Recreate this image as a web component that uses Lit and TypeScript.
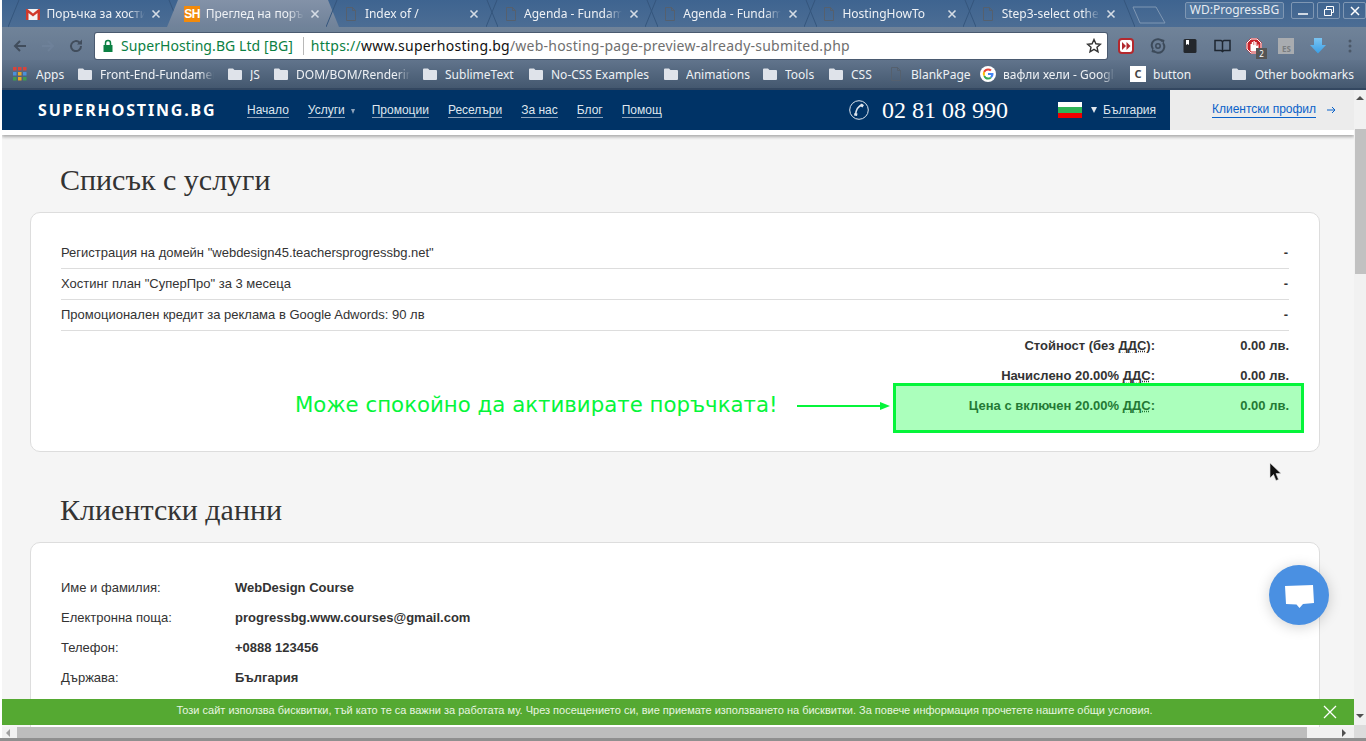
import { LitElement, html, css, svg } from "lit";
import { customElement } from "lit/decorators.js";

const docIcon = html`<svg class="ico" viewBox="0 0 16 16" width="16" height="16"><path d="M3.5 1.5h6l3 3v10h-9z M9.5 1.5v3h3" fill="none" stroke="#55606e" stroke-width="1"/></svg>`;
const folderIcon = html`<svg class="ico" viewBox="0 0 16 16" width="16" height="16"><path d="M1 3.5q0-1 1-1h4l1.500 1.500h6.500q1 0 1 1v8q0 1-1 1h-12q-1 0-1-1z" fill="#dfe3ea"/></svg>`;
const gmailIcon = html`<svg class="ico" viewBox="0 0 16 16" width="16" height="16"><path d="M1 3h14v11h-14z" fill="#f4f4f4"/><path d="M1 14V3h1.500L8 7.500 13.500 3H15v11h-2.500V7L8 10.500 3.500 7v7z" fill="#d0392b"/></svg>`;
const shIcon = html`<span class="sh">SH</span>`;

const googleIcon = html`<svg class="ico" viewBox="0 0 16 16" width="16" height="16"><circle cx="8" cy="8" r="8" fill="#fff"/><path d="M13.500 8.200q0-.6-.1-1.100H8v2h3.100q-.2 1-1 1.600l1.600 1.200q1.800-1.500 1.800-3.700z" fill="#4285f4"/><path d="M8 13.600q2.200 0 3.700-1.500l-1.600-1.200q-.9.600-2.100.6-2.200 0-3-2L3.300 9.700Q4.700 13.600 8 13.600z" fill="#34a853"/><path d="M5 9.500q-.4-1.500 0-3L3.300 5.300q-1 2.600 0 4.400z" fill="#fbbc05"/><path d="M8 4.500q1.300 0 2.200.8l1.500-1.500Q10.200 2.400 8 2.400q-3.300 0-4.700 2.900L5 6.500q.8-2 3-2z" fill="#ea4335"/></svg>`;
const appsIcon = html`<svg class="ico" viewBox="0 0 14 14" width="14" height="14">${[
  ["#d9433a", "#d9433a", "#d9433a"],
  ["#4a90d9", "#e8a526", "#4a90d9"],
  ["#3f9d4f", "#e8a526", "#3f9d4f"],
].map((row, y) => row.map((c, x) => svg`<rect x=${x * 5} y=${y * 5} width="3.500" height="3.500" fill=${c}/>`))}</svg>`;

const tabs = [
  { title: "Поръчка за хостинг", icon: gmailIcon },
  { title: "Преглед на поръчка", icon: shIcon, active: true },
  { title: "Index of /", icon: docIcon },
  { title: "Agenda - Fundamentals", icon: docIcon },
  { title: "Agenda - Fundamentals", icon: docIcon },
  { title: "HostingHowTo", icon: docIcon },
  { title: "Step3-select other", icon: docIcon },
];

const bookmarks = [
  { label: "Apps", icon: appsIcon, w: 64, tw: 30 },
  { label: "Front-End-Fundamentals", icon: folderIcon, w: 150, tw: 114, fade: true },
  { label: "JS", icon: folderIcon, w: 46, tw: 14 },
  { label: "DOM/BOM/Rendering", icon: folderIcon, w: 149, tw: 114, fade: true },
  { label: "SublimeText", icon: folderIcon, w: 106, tw: 72 },
  { label: "No-CSS Examples", icon: folderIcon, w: 135, tw: 102 },
  { label: "Animations", icon: folderIcon, w: 99, tw: 66 },
  { label: "Tools", icon: folderIcon, w: 66, tw: 34 },
  { label: "CSS", icon: folderIcon, w: 60, tw: 26 },
  { label: "BlankPage", icon: docIcon, w: 92, tw: 62 },
  { label: "вафли хели - Google Search", icon: googleIcon, w: 150, tw: 112, fade: true },
  { label: "button", icon: html`<span class="cfav">C</span>`, w: 92, tw: 40 },
];

const nav = ["Начало", "Услуги", "Промоции", "Реселъри", "За нас", "Блог", "Помощ"];

const services = [
  'Регистрация на домейн "webdesign45.teachersprogressbg.net"',
  'Хостинг план "СуперПро" за 3 месеца',
  "Промоционален кредит за реклама в Google Adwords: 90 лв",
];

const totals = [
  { label: "Стойност (без ", tail: "):" },
  { label: "Начислено 20.00% ", tail: ":" },
  { label: "Цена с включен 20.00% ", tail: ":" },
];

const clientData = [
  ["Име и фамилия:", "WebDesign Course"],
  ["Електронна поща:", "progressbg.www.courses@gmail.com"],
  ["Телефон:", "+0888 123456"],
  ["Държава:", "България"],
];

@customElement("app-root")
export class AppRoot extends LitElement {
  static styles = css`
    :host {
      display: block;
      position: relative;
      width: 1366px;
      height: 741px;
      overflow: hidden;
      background: #fff;
      font-family: "Liberation Sans", sans-serif;
    }

    /* browser chrome */
    .chrome {
      margin-left: 2px;
      font-family: "Noto Sans", sans-serif;
      font-size: 12px;
      color: #eef1f5;
    }
    .tabstrip {
      height: 27px;
      display: flex;
      background: linear-gradient(#3e6490, #4c6d94);
      padding-left: 6px;
    }
    .tab {
      position: relative;
      flex: none;
      width: 159.200px;
      height: 27px;
      display: flex;
      align-items: center;
      padding: 0 0 0 17px;
      box-sizing: border-box;
    }
    .tab .shape {
      position: absolute;
      left: 0;
      top: 0;
      width: 172px;
      height: 27px;
    }
    .tab .ico,
    .tab .sh {
      position: relative;
      margin-right: 5.500px;
    }
    .tab .title {
      position: relative;
      width: 98px;
      white-space: nowrap;
      overflow: hidden;
      font-size: 12px;
      -webkit-mask-image: linear-gradient(to right, #000 calc(100% - 16px), transparent);
      mask-image: linear-gradient(to right, #000 calc(100% - 16px), transparent);
    }
    .tab .close {
      position: relative;
      margin-left: 6.500px;
    }
    .sh {
      flex: none;
      width: 16px;
      height: 16px;
      background: #f28a0b;
      color: #fff;
      font: bold 12px/16px "Liberation Sans", sans-serif;
      letter-spacing: -0.500px;
      text-align: center;
    }
    .newtab {
      margin: 6px 0 0 10px;
      flex: none;
    }
    .winbtns {
      margin-left: auto;
      display: flex;
      gap: 7px;
      height: 17px;
      margin-top: 2px;
    }
    .wd {
      width: 99px;
      box-sizing: border-box;
      border: 1px solid #7f97b3;
      border-radius: 2px;
      background: #50749c;
      text-align: center;
      line-height: 14px;
      font-size: 12px;
      color: #e6ebf1;
    }
    .winctl {
      display: flex;
      gap: 3px;
    }
    .winctl span {
      width: 23px;
      height: 17px;
      box-sizing: border-box;
      border: 1px solid #7f97b3;
      border-radius: 2px;
      display: flex;
      align-items: center;
      justify-content: center;
    }
    .toolbar {
      height: 33px;
      box-sizing: border-box;
      display: flex;
      align-items: flex-start;
      background: linear-gradient(#708399, #64778f);
      padding-top: 6px;
    }
    .nav-ico {
      flex: none;
      width: 28px;
      display: flex;
      justify-content: center;
      margin-top: 5px;
    }
    .navs {
      flex: none;
      display: flex;
      width: 93px;
      padding-left: 4px;
      box-sizing: border-box;
    }
    .omni {
      flex: none;
      width: 1012px;
      height: 26px;
      box-sizing: border-box;
      background: #fff;
      border-radius: 2px;
      box-shadow: 0 0 0 1px #4a5a70;
      display: flex;
      align-items: center;
      font-size: 14px;
      line-height: 24px;
      padding-bottom: 1px;
      color: #6f6f6f;
      padding-left: 7px;
      white-space: nowrap;
    }
    .omni .secure {
      color: #0b8043;
      margin-left: 7px;
      letter-spacing: 0.080px;
    }
    .omni .sep {
      width: 1px;
      height: 18px;
      background: #b8b8b8;
      margin: 0 7px 0 10px;
    }
    .omni .url {
      letter-spacing: 0.230px;
    }
    .omni .https {
      color: #0b8043;
    }
    .omni .host {
      color: #111;
    }
    .omni .star {
      margin-left: auto;
      margin-right: 5px;
      display: flex;
    }
    .ext {
      flex: none;
      display: flex;
      margin-left: 3px;
    }
    .ext > span {
      position: relative;
      width: 32px;
      height: 26px;
      display: flex;
      align-items: center;
      justify-content: center;
    }
    .ext .badge {
      position: absolute;
      left: 18px;
      top: 15px;
      width: 11px;
      height: 11px;
      background: #555;
      color: #fff;
      font: 8px/11px "Noto Sans", sans-serif;
      text-align: center;
    }
    .bookmarks {
      height: 30px;
      box-sizing: border-box;
      display: flex;
      align-items: center;
      background: linear-gradient(#61748c, #44586f);
      padding-left: 11px;
      border-bottom: 2px solid #334760;
    }
    .bm {
      flex: none;
      display: flex;
      align-items: center;
      box-sizing: border-box;
      gap: 7px;
    }
    .bm:first-child {
      gap: 9px;
    }
    .bm .lbl {
      white-space: nowrap;
      overflow: hidden;
    }
    .bm .lbl.fade {
      -webkit-mask-image: linear-gradient(to right, #000 calc(100% - 14px), transparent);
      mask-image: linear-gradient(to right, #000 calc(100% - 14px), transparent);
    }
    .cfav {
      flex: none;
      width: 16px;
      height: 16px;
      background: #fff;
      color: #444;
      font: bold 11px/16px "Noto Sans", sans-serif;
      text-align: center;
    }
    .other {
      margin-left: auto;
      padding-right: 12px;
      display: flex;
      align-items: center;
      gap: 8px;
    }

    /* site */
    .viewport {
      position: relative;
      margin-left: 2px;
      height: 651px;
      background: #f5f5f5;
      overflow: hidden;
    }
    .site-head {
      position: relative;
      height: 45px;
      width: 1352px;
      box-sizing: border-box;
      display: flex;
      align-items: center;
      background: #003366;
      background-clip: padding-box;
      border-bottom: 5px solid #fff;
      color: #dfe6ee;
      font-size: 12px;
      box-shadow: 0 2px 3px rgba(0, 0, 0, 0.3);
    }
    .logo {
      margin-left: 36px;
      width: 209px;
      flex: none;
      font: bold 16px "Noto Sans", sans-serif;
      letter-spacing: 1.850px;
      color: #fff;
    }
    .mainnav {
      display: flex;
      gap: 19px;
      width: 602px;
      flex: none;
      align-items: center;
    }
    .mainnav a,
    .country a {
      color: #dfe6ee;
      border-bottom: 1px solid #8ea3bb;
      line-height: 14px;
    }
    .caret {
      display: inline-block;
      width: 0;
      height: 0;
      border-style: solid;
      border-color: #8ea3bb transparent transparent;
      border-width: 5px 2.500px 0;
      margin: 2px -2px 0 6px;
    }
    .nav-item {
      display: flex;
      align-items: center;
    }
    .phone {
      display: flex;
      align-items: center;
      gap: 13px;
      flex: none;
      width: 209px;
      font: 24px "Liberation Serif", serif;
      color: #fff;
    }
    .country {
      display: flex;
      align-items: center;
      flex: none;
      width: 112px;
    }
    .flag {
      width: 24px;
      height: 16px;
      background: linear-gradient(#fff 33%, #2fb457 33% 66%, #f00000 66%);
      margin-right: 8px;
    }
    .country .caret {
      border-color: #dfe6ee transparent transparent;
      border-width: 6px 3px 0;
      margin: 0 6px 0 1px;
    }
    .profile {
      align-self: stretch;
      flex: 1;
      background: #ececec;
      display: flex;
      align-items: center;
      gap: 11px;
      padding-left: 42px;
      color: #0a62c9;
    }
    .profile a {
      border-bottom: 1px solid #0a62c9;
      line-height: 15px;
    }
    .content {
      width: 1352px;
      box-sizing: border-box;
      padding: 0 34px 0 28px;
    }
    .pad-top {
      height: 27px;
    }
    h2 {
      margin: 0 0 14px 30px;
      font: normal 30px/36px "Liberation Serif", serif;
      color: #333;
    }
    .card {
      position: relative;
      background: #fff;
      border: 1px solid #ddd;
      border-radius: 10px;
      padding: 25px 30px 0;
      font-size: 13px;
      color: #333;
    }
    .card.services {
      height: 240px;
      box-sizing: border-box;
      margin-bottom: 40px;
    }
    .card.clients {
      min-height: 200px;
    }
    .svc {
      display: flex;
      justify-content: space-between;
      height: 31px;
      box-sizing: border-box;
      line-height: 30px;
      border-bottom: 1px solid #ddd;
    }
    .svc b {
      margin-right: 1px;
    }
    .total {
      display: flex;
      justify-content: flex-end;
      height: 30px;
      line-height: 30px;
      font-weight: bold;
    }
    .total .val {
      width: 134px;
      text-align: right;
    }
    abbr {
      text-decoration: underline dotted;
    }
    .highlight {
      position: absolute;
      left: 862px;
      top: 170px;
      width: 411px;
      height: 50px;
      box-sizing: border-box;
      border: 3px solid #05f53a;
      background: rgba(10, 255, 60, 0.34);
    }
    .note {
      position: absolute;
      left: 264px;
      top: 179px;
      font: 21.300px "DejaVu Sans", sans-serif;
      color: #05f53a;
      white-space: nowrap;
    }
    .note-arrow {
      position: absolute;
      left: 766px;
      top: 188px;
    }
    .client {
      display: grid;
      grid-template-columns: 174px 1fr;
      grid-auto-rows: 30px;
      line-height: 30px;
      padding-top: 5px;
    }
    .client b {
      font-weight: bold;
    }
    .chat {
      position: absolute;
      left: 1267px;
      top: 475px;
      width: 60px;
      height: 60px;
      border-radius: 50%;
      background: #4a90e2;
      box-shadow: 0 2px 14px rgba(0, 0, 0, 0.18);
      display: flex;
      align-items: center;
      justify-content: center;
    }
    .cookie {
      position: absolute;
      left: 0;
      top: 609px;
      width: 1352px;
      height: 26px;
      box-sizing: border-box;
      padding-right: 27px;
      background: #55a932;
      color: #e8f5e0;
      font-size: 11px;
      line-height: 23px;
      text-align: center;
    }
    .cookie svg {
      position: absolute;
      right: 17px;
      top: 6px;
    }

    /* scrollbars */
    .vscroll {
      position: absolute;
      right: 0;
      top: 90px;
      width: 12px;
      height: 635px;
      background: #f1f1f1;
    }
    .vscroll .thumb {
      position: absolute;
      left: 1px;
      top: 39px;
      width: 11px;
      height: 145px;
      background: #c1c1c1;
    }
    .hscroll {
      position: absolute;
      left: 2px;
      right: 12px;
      top: 727px;
      height: 11px;
      background: #f1f1f1;
    }
    .hscroll .thumb {
      position: absolute;
      left: 15px;
      top: 0;
      width: 1290px;
      height: 11px;
      background: #bdbdbd;
    }
    .corner {
      position: absolute;
      right: 0;
      top: 725px;
      width: 12px;
      height: 13px;
      background: #dcdcdc;
    }
    .bottom-edge {
      position: absolute;
      left: 0;
      right: 0;
      top: 738px;
      height: 3px;
      background: #8f8f8f;
    }
    .arrow-btn {
      position: absolute;
      width: 0;
      height: 0;
      border-style: solid;
      border-color: transparent;
    }
    .arrow-btn.up {
      left: 2px;
      top: 6px;
      border-width: 0 4px 4px;
      border-bottom-color: #505050;
    }
    .arrow-btn.down {
      left: 2px;
      top: 624px;
      border-width: 4px 4px 0;
      border-top-color: #505050;
    }
    .arrow-btn.left {
      left: 4px;
      top: 2px;
      border-width: 4px 4px 4px 0;
      border-right-color: #a0a0a0;
    }
    .arrow-btn.right {
      left: 1340px;
      top: 2px;
      border-width: 4px 0 4px 4px;
      border-left-color: #505050;
    }
    .cursor {
      position: absolute;
      left: 1269px;
      top: 462px;
    }
  `;

  private _tabShape(active: boolean) {
    return html`<svg class="shape" viewBox="0 0 172 27">
      ${active
        ? svg`<defs><linearGradient id="act" x1="0" y1="0" x2="0" y2="1"><stop offset="0" stop-color="#8392a8"/><stop offset="1" stop-color="#708299"/></linearGradient></defs><path d="M0 27 L11 0 H161 L172 27z" fill="url(#act)"/>`
        : svg`<path d="M0 27 L11 0 M161 0 L172 27" fill="none" stroke="#35567d" stroke-width="1"/>`}
    </svg>`;
  }

  private _renderTabs() {
    return tabs.map(
      (t) => html`<div class="tab">
        ${this._tabShape(!!t.active)} ${t.icon}
        <span class="title">${t.title}</span>
        <svg class="close" width="10" height="10" viewBox="0 0 10 10"><path d="M1.500 1.500l7 7M8.500 1.500l-7 7" stroke="#d5dce5" stroke-width="1.600"/></svg>
      </div>`
    );
  }

  private _renderExtensions() {
    return html`<div class="ext">
      <span><svg width="16" height="16" viewBox="0 0 16 16"><rect x="1" y="1" width="14" height="14" rx="3" fill="#fff" stroke="#b3282d" stroke-width="2"/><path d="M4 4l4 4-4 4zM8.500 4l4 4-4 4z" fill="#b3282d"/></svg></span>
      <span><svg width="16" height="16" viewBox="0 0 16 16"><path d="M3 11A6 6 0 0 1 12.500 3.500M13 5A6 6 0 0 1 3.500 12.500" fill="none" stroke="#3c4a5a" stroke-width="2"/><path d="M11 1l3.500 1-1 4zM5 15l-3.500-1 1-4z" fill="#3c4a5a"/><circle cx="8" cy="8" r="2.200" fill="none" stroke="#3c4a5a" stroke-width="1.500"/></svg></span>
      <span><svg width="14" height="14" viewBox="0 0 14 14"><rect width="13" height="14" x=".5" rx="1.500" fill="#23272c"/><path d="M3 1h3v5L4.500 5 3 6z" fill="#fff"/></svg></span>
      <span><svg width="17" height="14" viewBox="0 0 17 14"><path d="M1 1.500h6l1.500 1 1.500-1h6v10h-6l-1.500 1-1.500-1H1zM8.500 2.500v10" fill="none" stroke="#1e2630" stroke-width="1.500"/></svg></span>
      <span><svg width="16" height="16" viewBox="0 0 16 16"><path d="M5 0h6l5 5v6l-5 5H5l-5-5V5z" fill="#c8222a"/><path d="M5 1h6l4 4v6l-4 4H5l-4-4V5z" fill="none" stroke="#fff" stroke-width="1"/><path d="M4.500 13V6h1.300V4h1.200v3h.5V3h1.300v4h.4V4h1.300v4h1V6.500h1V10l-2 3.500H5.500z" fill="#fff"/></svg><i class="badge">2</i></span>
      <span><svg width="16" height="16" viewBox="0 0 16 16"><rect width="16" height="16" fill="#a9acb0"/><text x="4" y="14" font-size="8" font-weight="bold" fill="#7a7d80" font-family="Noto Sans">ES</text></svg></span>
      <span><svg width="16" height="16" viewBox="0 0 16 16"><defs><linearGradient id="dl" x1="0" y1="0" x2="0" y2="1"><stop offset="0" stop-color="#7ac4f2"/><stop offset="1" stop-color="#3a9fe6"/></linearGradient></defs><path d="M4 0h8v7h4l-8 8.500L0 7h4z" fill="url(#dl)"/></svg></span>
      <span><svg width="4" height="14" viewBox="0 0 4 14"><circle cx="2" cy="2" r="1.500" fill="#4b5868"/><circle cx="2" cy="7" r="1.500" fill="#4b5868"/><circle cx="2" cy="12" r="1.500" fill="#4b5868"/></svg></span>
    </div>`;
  }

  private _renderChrome() {
    return html`<div class="chrome">
      <div class="tabstrip">
        ${this._renderTabs()}
        <svg class="newtab" width="34" height="18" viewBox="0 0 34 18"><path d="M1 1H24L33 17H8z" fill="none" stroke="#7f97b3"/></svg>
        <div class="winbtns">
          <div class="wd">WD:ProgressBG</div>
          <div class="winctl">
            <span><svg width="12" height="10" viewBox="0 0 12 10"><path d="M1 8h10" stroke="#fff" stroke-width="1.500"/></svg></span>
            <span><svg width="12" height="10" viewBox="0 0 12 10"><path d="M1.500 3.500h7v6h-7zM3.500 3V.5h7v6H9" fill="none" stroke="#fff"/></svg></span>
            <span><svg width="10" height="10" viewBox="0 0 10 10"><path d="M1 1l8 8M9 1l-8 8" stroke="#fff" stroke-width="1.500"/></svg></span>
          </div>
        </div>
      </div>
      <div class="toolbar">
        <div class="navs">
          <span class="nav-ico"><svg width="16" height="16" viewBox="0 0 16 16"><path d="M14 8H3M8 3L3 8l5 5" fill="none" stroke="#414d5c" stroke-width="2"/></svg></span>
          <span class="nav-ico"><svg width="16" height="16" viewBox="0 0 16 16"><path d="M2 8h11M8 3l5 5-5 5" fill="none" stroke="#6e8199" stroke-width="2"/></svg></span>
          <span class="nav-ico"><svg width="16" height="16" viewBox="0 0 16 16"><path d="M13 8a5 5 0 1 1-1.500-3.500" fill="none" stroke="#414d5c" stroke-width="2"/><path d="M14 1.500v5h-5z" fill="#414d5c"/></svg></span>
        </div>
        <div class="omni">
          <svg width="12" height="14" viewBox="0 0 12 14"><path d="M1.500 6h9v7h-9z" fill="#0b8043"/><path d="M3.500 6V4a2.500 2.500 0 0 1 5 0v2" fill="none" stroke="#0b8043" stroke-width="1.500"/></svg>
          <span class="secure">SuperHosting.BG Ltd [BG]</span>
          <span class="sep"></span>
          <span class="url"><span class="https">https://</span><span class="host">www.superhosting.bg</span>/web-hosting-page-preview-already-submited.php</span>
          <span class="star"><svg width="16" height="16" viewBox="0 0 16 16"><path d="M8 1.500l1.900 4.300 4.600.4-3.500 3 1 4.600L8 11.400l-4 2.400 1-4.600-3.500-3 4.600-.4z" fill="none" stroke="#333" stroke-width="1.400"/></svg></span>
        </div>
        ${this._renderExtensions()}
      </div>
      <div class="bookmarks">
        ${bookmarks.map(
          (b) => html`<div class="bm" style="width:${b.w}px">
            ${b.icon}
            <span class="lbl ${b.fade ? "fade" : ""}" style="width:${b.tw}px">${b.label}</span>
          </div>`
        )}
        <div class="other">${folderIcon}<span>Other bookmarks</span></div>
      </div>
    </div>`;
  }

  private _renderHeader() {
    return html`<div class="site-head">
      <div class="logo">SUPERHOSTING.BG</div>
      <nav class="mainnav">
        ${nav.map(
          (n) => html`<span class="nav-item"><a>${n}</a>${n === "Услуги" ? html`<span class="caret"></span>` : ""}</span>`
        )}
      </nav>
      <div class="phone">
        <svg width="20" height="20" viewBox="0 0 20 20"><circle cx="10" cy="10" r="9.300" fill="none" stroke="#dfe6ee"/><path d="M13.500 4.500C9.500 6 7 10.500 6.500 14.500" fill="none" stroke="#dfe6ee" stroke-width="1.500"/><path d="M12 3.500l3 1.500-1.500 2.500-2.500-1.500zM5.500 13l3 .5-.5 2.500-3-.5z" fill="#dfe6ee"/></svg>
        <span>02 81 08 990</span>
      </div>
      <div class="country">
        <span class="flag"></span><span class="caret"></span><a>България</a>
      </div>
      <div class="profile">
        <a>Клиентски профил</a>
        <svg width="9" height="8" viewBox="0 0 9 8"><path d="M0 4h8M5 1l3 3-3 3" fill="none" stroke="#0a62c9"/></svg>
      </div>
    </div>`;
  }

  private _renderContent() {
    return html`<div class="content">
      <div class="pad-top"></div>
      <h2>Списък с услуги</h2>
      <div class="card services">
        ${services.map((s) => html`<div class="svc"><span>${s}</span><b>-</b></div>`)}
        ${totals.map(
          (t) => html`<div class="total">
            <span>${t.label}<abbr>ДДС</abbr>${t.tail}</span>
            <span class="val">0.00 лв.</span>
          </div>`
        )}
        <div class="highlight"></div>
        <div class="note">Може спокойно да активирате поръчката!</div>
        <svg class="note-arrow" width="93" height="10" viewBox="0 0 93 10"><path d="M0 5h85" stroke="#05f53a" stroke-width="2"/><path d="M83 1l10 4-10 4z" fill="#05f53a"/></svg>
      </div>
      <h2>Клиентски данни</h2>
      <div class="card clients">
        <div class="client">
          ${clientData.map(([k, v]) => html`<span>${k}</span><b>${v}</b>`)}
        </div>
      </div>
    </div>`;
  }

  render() {
    return html`
      ${this._renderChrome()}
      <div class="viewport">
        ${this._renderHeader()} ${this._renderContent()}
        <div class="chat">
          <svg width="30" height="26" viewBox="0 0 30 26"><path d="M1 4l28-1 1 18-11 1-3.500 4-3-3.500L2 22z" fill="#fff"/></svg>
        </div>
        <div class="cookie">
          Този сайт използва бисквитки, тъй като те са важни за работата му. Чрез посещението си, вие приемате използването на бисквитки. За повече информация прочетете нашите общи условия.
          <svg width="14" height="14" viewBox="0 0 14 14"><path d="M1 1l12 12M13 1L1 13" stroke="#fff" stroke-width="1.300"/></svg>
        </div>
      </div>
      <div class="vscroll">
        <span class="arrow-btn up"></span>
        <span class="arrow-btn down"></span>
        <div class="thumb"></div>
      </div>
      <div class="hscroll">
        <span class="arrow-btn left"></span>
        <span class="arrow-btn right"></span>
        <div class="thumb"></div>
      </div>
      <div class="corner"></div>
      <div class="bottom-edge"></div>
      <svg class="cursor" width="14" height="20" viewBox="0 0 14 20"><path d="M1 1v15l3.500-3.500 2.500 6 2.500-1-2.500-6H12z" fill="#111" stroke="#ddd" stroke-width=".6"/></svg>
    `;
  }
}
